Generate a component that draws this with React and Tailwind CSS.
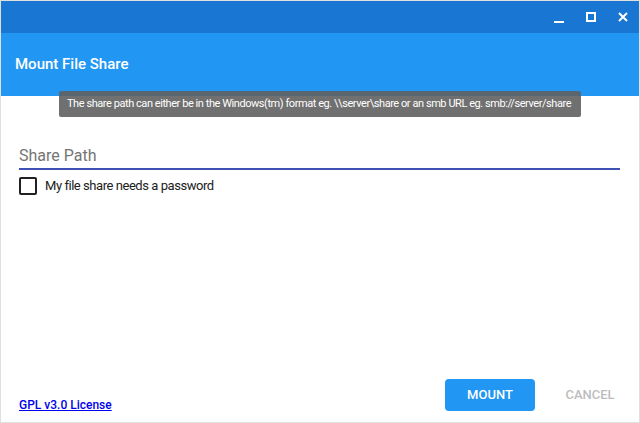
import React, { useState } from "react";

const TitleBar = () => (
  <div className="h-8 bg-[#1976d2] flex items-center justify-end">
    <button className="w-8 h-8 flex items-center justify-center">
      <span className="block w-[10px] h-[2px] bg-white mt-[10px]" />
    </button>
    <button className="w-8 h-8 flex items-center justify-center">
      <span className="block w-[10px] h-[10px] border-2 border-white" />
    </button>
    <button className="w-8 h-8 flex items-center justify-center">
      <svg width="10" height="10" viewBox="0 0 10 10">
        <path d="M1 1L9 9M9 1L1 9" stroke="white" strokeWidth="2" />
      </svg>
    </button>
  </div>
);

const App = () => {
  const [needsPassword, setNeedsPassword] = useState(false);

  return (
    <div
      className="w-[640px] h-[423px] bg-white border border-[#e0e0e0] flex flex-col relative overflow-hidden"
      style={{ fontFamily: "Roboto, 'Liberation Sans', sans-serif" }}
    >
      <TitleBar />
      <div className="h-[63px] bg-[#2196f3] flex items-center px-[14px]">
        <h1 className="text-white text-[15px] font-medium">Mount File Share</h1>
      </div>

      <div className="absolute left-[58px] top-[90px] w-[522px] h-[26px] bg-[#616161]/90 rounded-[2px] flex items-center px-[8px] text-white text-[11px] tracking-[-0.44px] whitespace-nowrap">
        The share path can either be in the Windows(tm) format eg. \\server\share or an smb URL eg. smb://server/share
      </div>

      <div className="flex-1 flex flex-col pl-[18px] pr-[19px] pt-[50px]">
        <div className="border-b-2 border-[#3f51b5] h-[24px] flex items-end">
          <input
            type="text"
            placeholder="Share Path"
            className="w-full outline-none text-[16px] text-[#212121] placeholder:text-[#757575] leading-[20px] pb-[2px]"
          />
        </div>
        <label className="flex items-center mt-[6px] gap-[8px] cursor-pointer">
          <span
            onClick={() => setNeedsPassword(!needsPassword)}
            className="w-[18px] h-[18px] border-2 border-[#212121] rounded-[2px] flex items-center justify-center"
          >
            {needsPassword && (
              <svg width="12" height="12" viewBox="0 0 12 12">
                <path d="M2 6l3 3 5-6" stroke="#212121" strokeWidth="2" fill="none" />
              </svg>
            )}
          </span>
          <span className="text-[13px] text-[#212121] tracking-[-0.45px]">My file share needs a password</span>
        </label>

        <div className="mt-auto mb-[11px] flex items-end justify-between">
          <a href="#" className="text-[12px] font-medium text-[#0000ee] underline -mb-[3px]">
            GPL v3.0 License
          </a>
          <div className="flex items-center gap-[24px] -mr-[1px]">
            <button className="w-[90px] h-[32px] bg-[#2196f3] rounded-[4px] text-white text-[13px] font-medium">
              MOUNT
            </button>
            <button className="w-[62px] h-[32px] text-[#bdbdbd] text-[13px] font-medium">
              CANCEL
            </button>
          </div>
        </div>
      </div>
    </div>
  );
};

export default App;
